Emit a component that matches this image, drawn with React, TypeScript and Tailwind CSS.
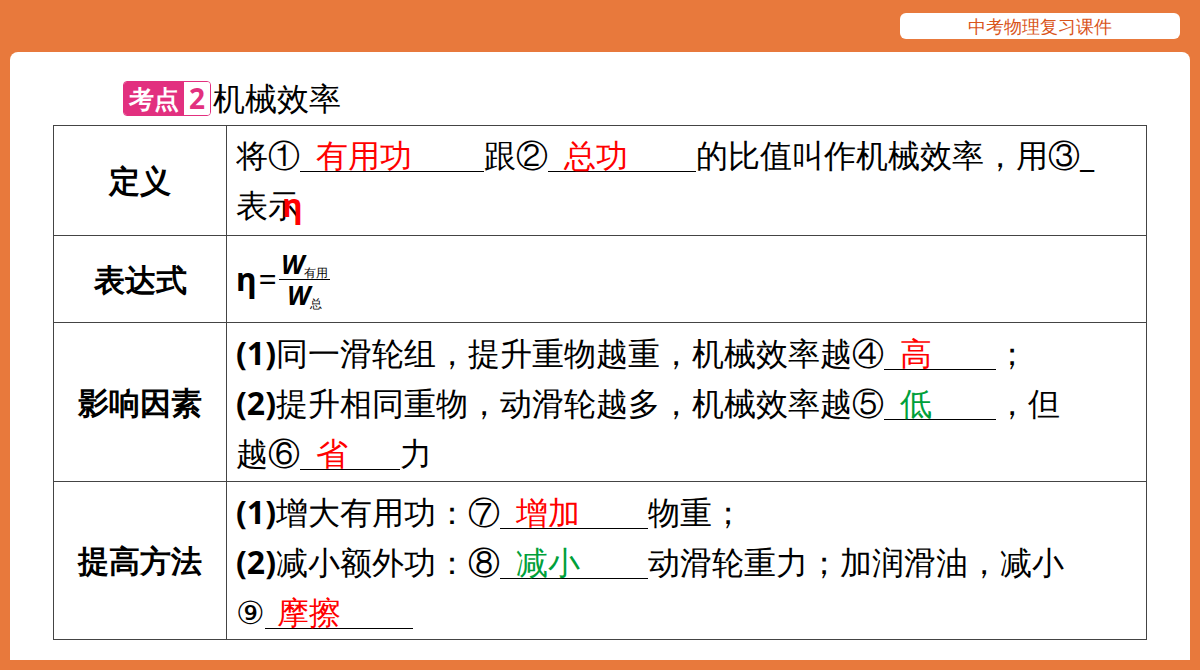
const Blank = ({ w, text, color = "text-[#ff0000]", pl = "pl-4" }: { w: string; text?: string; color?: string; pl?: string }) => (
  <span className={`inline-block ${w} border-b-[1.5px] border-black leading-[32px] align-baseline ${pl} ${color}`}>
    {text ?? "\u00a0"}
  </span>
);

const N = ({ children }: { children: React.ReactNode }) => (
  <b className="font-['Liberation_Serif',serif]">{children}</b>
);

const Label = ({ children }: { children: React.ReactNode }) => (
  <td className="border border-[#444] w-[173px] text-center font-bold text-[31px]">
    {children}
  </td>
);

export default function App() {
  return (
    <div className="w-[1200px] h-[670px] bg-[#e8793c] relative overflow-hidden font-['Noto_Sans_CJK_SC',sans-serif]">
      <div className="absolute right-[20px] top-[13px] w-[280px] h-[26px] bg-white rounded-md flex items-center justify-center text-[#d9541a] text-[18px]">
        中考物理复习课件
      </div>
      <div className="absolute left-[10px] top-[52px] w-[1180px] h-[608px] bg-white rounded-t-lg">
        <div className="flex items-center ml-[113px] mt-[26px] h-[40px]">
          <div className="flex h-[35px] rounded border border-[#e2307f] overflow-hidden">
            <span className="bg-[#e2307f] text-white font-bold text-[25px] px-[5px] leading-[33px]">考点</span>
            <span className="bg-white text-[#e2307f] font-bold text-[28px] px-[5px] leading-[33px] font-['Liberation_Sans',sans-serif]">2</span>
          </div>
          <span className="text-[32px] ml-[2px]">机械效率</span>
        </div>
        <table className="ml-[43px] mt-[7px] w-[1094px] border-collapse text-[32px] text-black">
          <tbody>
            <tr className="h-[110px]">
              <Label>定义</Label>
              <td className="border border-[#444] pl-[9px] leading-[50px] align-top pt-[4px]">
                <div className="whitespace-nowrap overflow-hidden w-[910px]">
                  将①<Blank w="w-[184px]" text="有用功" />跟②<Blank w="w-[148px]" text="总功" />的比值叫作机械效率，用③_
                </div>
                <div>表示<span className="text-[#ff0000] ml-[-18px] font-bold font-['Liberation_Serif',serif]">η</span></div>
              </td>
            </tr>
            <tr className="h-[87px]">
              <Label>表达式</Label>
              <td className="border border-[#444] pl-[9px]">
                <div className="flex items-center font-bold font-['Liberation_Serif',serif]">
                  <span className="text-[32px]">η</span>
                  <span className="text-[32px] font-normal mx-[2px]">=</span>
                  <span className="inline-flex flex-col items-center text-[26px] italic leading-[30px]">
                    <span className="border-b-[1.5px] border-black px-[2px]">W<sub className="text-[12px] not-italic font-normal font-['Noto_Sans_CJK_SC',serif]">有用</sub></span>
                    <span>W<sub className="text-[12px] not-italic font-normal font-['Noto_Sans_CJK_SC',serif]">总</sub></span>
                  </span>
                </div>
              </td>
            </tr>
            <tr className="h-[159px]">
              <Label>影响因素</Label>
              <td className="border border-[#444] pl-[9px] leading-[50px] pt-[2px]">
                <div><N>(1)</N>同一滑轮组，提升重物越重，机械效率越④<Blank w="w-[112px]" text="高" />；</div>
                <div><N>(2)</N>提升相同重物，动滑轮越多，机械效率越⑤<Blank w="w-[112px]" text="低" color="text-[#00a03a]" />，但</div>
                <div>越⑥<Blank w="w-[100px]" text="省" />力</div>
              </td>
            </tr>
            <tr className="h-[158px]">
              <Label>提高方法</Label>
              <td className="border border-[#444] pl-[9px] leading-[50px] pt-[2px]">
                <div><N>(1)</N>增大有用功：⑦<Blank w="w-[148px]" text="增加" />物重；</div>
                <div><N>(2)</N>减小额外功：⑧<Blank w="w-[148px]" text="减小" color="text-[#00a03a]" />动滑轮重力；加润滑油，减小</div>
                <div>⑨<Blank w="w-[148px]" text="摩擦" pl="pl-3" /></div>
              </td>
            </tr>
          </tbody>
        </table>
      </div>
    </div>
  );
}
